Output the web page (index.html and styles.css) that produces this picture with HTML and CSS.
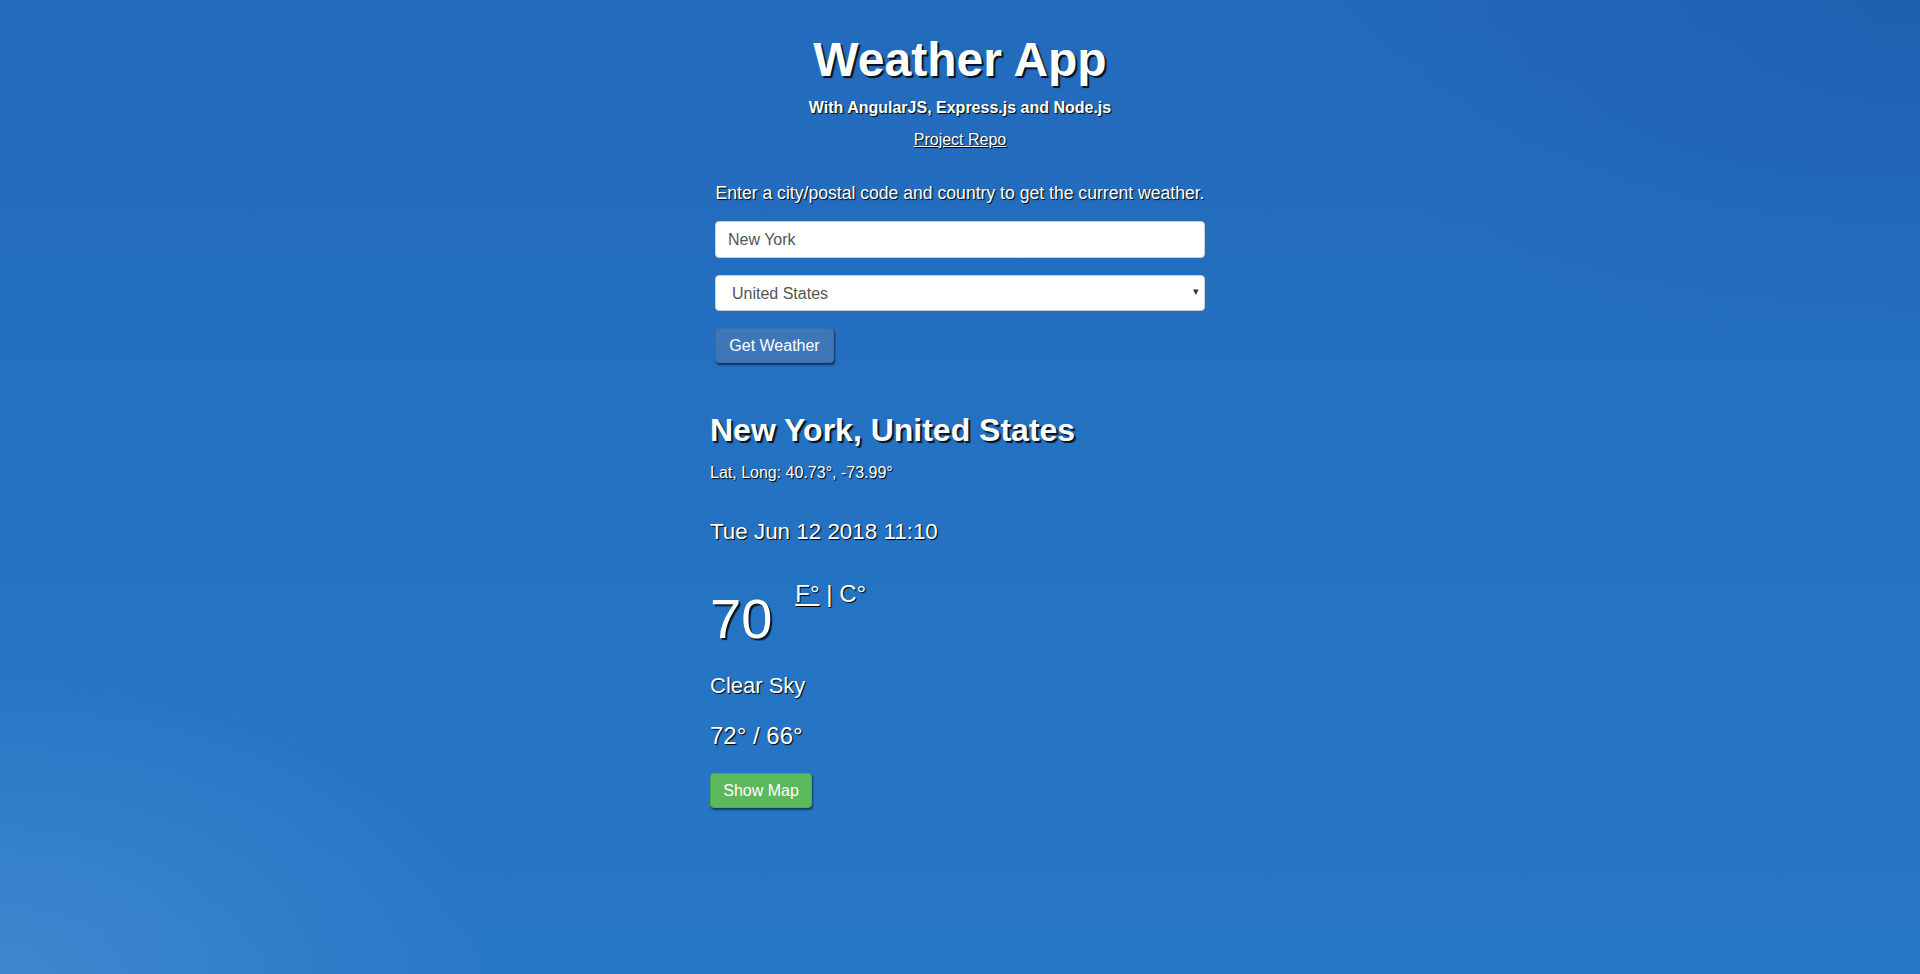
FILE: index.html
```html
<!DOCTYPE html>
<html lang="en">
<head>
<meta charset="utf-8">
<title>Weather App</title>
<link rel="stylesheet" href="styles.css">
</head>
<body>
<div class="page">
  <header class="header">
    <h1 class="title">Weather App</h1>
    <p class="subtitle">With AngularJS, Express.js and Node.js</p>
    <a class="repo" href="#">Project Repo</a>
  </header>
  <main class="main">
    <form class="form">
      <p class="intro">Enter a city/postal code and country to get the current weather.</p>
      <input class="field" type="text" value="New York">
      <div class="select-wrap">
        <select class="field select">
          <option>United States</option>
        </select>
        <span class="caret">▾</span>
      </div>
      <div class="actions"><button type="button" class="btn btn-blue">Get Weather</button></div>
    </form>
    <section class="result">
      <h2 class="place">New York, United States</h2>
      <p class="coords">Lat, Long: 40.73°, -73.99°</p>
      <p class="date">Tue Jun 12 2018 11:10</p>
      <div class="temp-row">
        <span class="temp">70</span>
        <span class="units"><a class="unit-link" href="#">F°</a> | C°</span>
      </div>
      <p class="desc">Clear Sky</p>
      <p class="range">72° / 66°</p>
      <button type="button" class="btn btn-green">Show Map</button>
    </section>
  </main>
</div>
</body>
</html>
```
FILE: styles.css
```css
* { box-sizing: border-box; }
html, body { margin: 0; padding: 0; height: 100%; }
body {
  font-family: "Liberation Sans", Arial, sans-serif;
  color: #fff;
  min-height: 974px;
  background:
    radial-gradient(ellipse 700px 450px at 0% 100%, rgba(85, 150, 212, 0.5), rgba(85,150,212,0) 70%),
    radial-gradient(ellipse 900px 500px at 100% 0%, rgba(25, 80, 160, 0.4), rgba(25,80,160,0) 70%),
    linear-gradient(to bottom, #236abb 0%, #2572c3 55%, #2778c7 100%);
}
.page { width: 500px; margin: 0 auto; }
.header { text-align: center; padding-top: 34px; }
.title {
  margin: 0; font-size: 48px; line-height: 52px; font-weight: bold;
  text-shadow: 2px 2px 1px rgba(0,0,0,0.85);
}
.subtitle {
  margin: 12px 0 0; font-size: 16px; line-height: 20px; font-weight: bold;
  text-shadow: 1px 1px 1px #000;
}
.repo {
  display: inline-block; margin-top: 12px; font-size: 16px; line-height: 20px;
  color: #fff; text-decoration: underline; text-shadow: 1px 1px 1px #000;
}
.form { padding: 0 5px; margin-top: 32px; }
.intro {
  margin: 0; font-size: 17.6px; line-height: 22px; text-align: center;
  text-shadow: 1px 1px 1px #000;
}
.field {
  display: block; width: 100%; height: 37px; margin-top: 17px;
  font-family: "Liberation Sans", Arial, sans-serif; font-size: 16px; color: #555;
  background: #fff; border: 1px solid #ccc; border-radius: 4px; padding: 0 12px;
  outline: none;
}
.select-wrap { position: relative; margin-top: 17px; }
.select { margin-top: 0; height: 36px; padding-left: 16px; -webkit-appearance: none; appearance: none; }
.caret {
  position: absolute; right: 6px; top: 10px; font-size: 11px; color: #333; pointer-events: none;
}
.actions { margin-top: 17px; }
.btn {
  font-family: "Liberation Sans", Arial, sans-serif; font-size: 16px; color: #fff;
  border-radius: 4px; cursor: pointer; padding: 0 12px;
}
.btn-blue {
  width: 119px; height: 35px; background: #3e77b7; border: 1px solid #3a6fab;
  box-shadow: 1px 2px 2px rgba(0,0,0,0.55);
}
.result { margin-top: 49px; }
.place {
  margin: 0; font-size: 32px; line-height: 36px; font-weight: bold;
  text-shadow: 2px 2px 1px rgba(0,0,0,0.85);
}
.coords {
  margin: 15px 0 0; font-size: 16px; line-height: 20px; text-shadow: 1px 1px 1px #000;
}
.date {
  margin: 36px 0 0; font-size: 22.4px; line-height: 26px; text-shadow: 1px 1px 1px #000;
}
.temp-row { display: flex; align-items: flex-start; margin-top: 35px; }
.temp {
  font-size: 56px; line-height: 64px; margin-top: 7px;
  text-shadow: 2px 2px 1px rgba(0,0,0,0.8);
}
.units {
  margin-left: 23px; font-size: 24px; line-height: 28px; text-shadow: 1px 1px 1px #000;
}
.unit-link { color: #fff; text-decoration: underline; }
.desc {
  margin: 22px 0 0; font-size: 22px; line-height: 26px; text-shadow: 1px 1px 1px #000;
}
.range {
  margin: 23px 0 0; font-size: 24px; line-height: 28px; text-shadow: 1px 1px 1px #000;
}
.btn-green {
  display: block; margin-top: 23px; width: 102px; height: 35px;
  background: #5cb85c; border: 1px solid #4cae4c;
  box-shadow: 1px 2px 2px rgba(0,0,0,0.5);
}
```
